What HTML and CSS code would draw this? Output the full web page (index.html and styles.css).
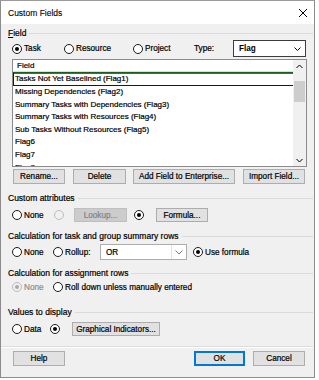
FILE: index.html
```html
<!DOCTYPE html>
<html>
<head>
<meta charset="utf-8">
<link rel="stylesheet" href="styles.css">
</head>
<body>
<div class="dialog">
  <div class="titlebar">
    <span class="title">Custom Fields</span>
    <svg class="close" width="10" height="10" viewBox="0 0 10 10"><path d="M1 1L9 9M9 1L1 9" stroke="#000" stroke-width="1"/></svg>
  </div>
  <div class="content">
    <div class="group-head h-field"><span><u>F</u>ield</span><i class="rule"></i></div>
    <div class="row type-row">
      <label class="radio w-task"><span class="circle on"></span>Task</label>
      <label class="radio w-res"><span class="circle"></span>Resource</label>
      <label class="radio w-proj"><span class="circle"></span>Project</label>
      <span class="type-label">Type:</span>
      <div class="select type-select"><span class="sel-text bold">Flag</span><svg width="7" height="4" viewBox="0 0 7 4"><path d="M0.5 0.5L3.5 3.5L6.5 0.5" fill="none" stroke="#000"/></svg></div>
    </div>
    <div class="row list-wrap">
      <div class="listbox">
        <div class="list-main">
          <div class="list-head">Field</div>
          <div class="list-row selected">Tasks Not Yet Baselined (Flag1)</div>
          <div class="list-row">Missing Dependencies (Flag2)</div>
          <div class="list-row">Summary Tasks with Dependencies (Flag3)</div>
          <div class="list-row">Summary Tasks with Resources (Flag4)</div>
          <div class="list-row">Sub Tasks Without Resources (Flag5)</div>
          <div class="list-row">Flag6</div>
          <div class="list-row">Flag7</div>
          <div class="list-row">Flag8</div>
        </div>
        <div class="scrollbar">
          <svg class="arrow" width="7" height="5" viewBox="0 0 7 5"><path d="M0.5 4L3.5 1L6.5 4" fill="none" stroke="#000"/></svg>
          <div class="thumb"></div>
          <div class="track"></div>
          <svg class="arrow" width="7" height="5" viewBox="0 0 7 5"><path d="M0.5 1L3.5 4L6.5 1" fill="none" stroke="#000"/></svg>
        </div>
      </div>
    </div>
    <div class="row btn-row">
      <button class="btn b-rename">Rename...</button>
      <button class="btn b-delete">Delete</button>
      <button class="btn b-add">Add Field to Enterprise...</button>
      <button class="btn b-import">Import Field...</button>
    </div>

    <div class="group-head h-attr"><span>Custom attributes</span><i class="rule"></i></div>
    <div class="row attr-row">
      <label class="radio w-none"><span class="circle"></span>None</label>
      <span class="circle disabled lone"></span>
      <button class="btn disabled b-lookup">Lookup...</button>
      <span class="circle on lone2"></span>
      <button class="btn b-formula">Formula...</button>
    </div>

    <div class="group-head h-calc"><span>Calculation for task and group summary rows</span><i class="rule"></i></div>
    <div class="row calc-row">
      <label class="radio w-none2"><span class="circle"></span>None</label>
      <label class="radio w-rollup"><span class="circle"></span>Rollup:</label>
      <div class="select or-select"><span class="sel-text">OR</span><i class="divider"></i><svg width="8" height="5" viewBox="0 0 8 5"><path d="M0.5 0.5L4 4L7.5 0.5" fill="none" stroke="#777"/></svg></div>
      <label class="radio use-formula"><span class="circle on"></span>Use formula</label>
    </div>

    <div class="group-head h-assign"><span>Calculation for assignment rows</span><i class="rule"></i></div>
    <div class="row assign-row">
      <label class="radio w-none2 grey"><span class="circle on disabled"></span>None</label>
      <label class="radio"><span class="circle"></span>Roll down unless manually entered</label>
    </div>

    <div class="group-head h-values"><span>Values to display</span><i class="rule"></i></div>
    <div class="row values-row">
      <label class="radio w-data"><span class="circle"></span>Data</label>
      <span class="circle on"></span>
      <button class="btn b-graph">Graphical Indicators...</button>
    </div>

    <div class="separator"></div>
    <div class="row bottom-row">
      <button class="btn b-help">Help</button>
      <button class="btn default b-ok">OK</button>
      <button class="btn b-cancel">Cancel</button>
    </div>
  </div>
</div>
</body>
</html>
```

FILE: styles.css
```css
* { box-sizing: border-box; }
html, body { margin: 0; padding: 0; background: #fff; }
body {
  font-family: "Liberation Sans", Arial, sans-serif;
  font-size: 8.2px;
  color: #000;
}
.dialog {
  width: 315px;
  height: 378px;
  border: 1px solid #8c8c8c;
  border-top-color: #9a9a9a;
  background: #f0f0f0;
  display: flex;
  flex-direction: column;
}
.titlebar {
  height: 23px;
  background: #fff;
  display: flex;
  align-items: center;
  justify-content: space-between;
  padding: 0 6px 0 7px;
}
.title { font-size: 8.5px; -webkit-text-stroke: 0.1px #000; }
.content {
  padding: 0 1px 0 7px;
  -webkit-text-stroke: 0.2px #000;
}
.group-head {
  height: 10px;
  display: flex;
  align-items: center;
  line-height: 10px;
  font-size: 8.5px;
}
.group-head u { text-decoration: underline; text-underline-offset: 1px; }
.rule {
  flex: 1;
  height: 1px;
  background: #dadada;
  margin-left: 3px;
}
.row {
  display: flex;
  align-items: center;
  padding: 0 6px 0 4px;
}
.radio {
  display: inline-flex;
  align-items: center;
  gap: 2px;
  white-space: nowrap;
}
.circle {
  display: inline-block;
  position: relative;
  width: 10px;
  height: 10px;
  border: 1px solid #1a1a1a;
  border-radius: 50%;
  background: #fff;
  flex: none;
}
.circle.on::after {
  content: "";
  position: absolute;
  left: 2px; top: 2px;
  width: 4px; height: 4px;
  border-radius: 50%;
  background: #000;
}
.circle.disabled { border-color: #bcbcbc; background: #f0f0f0; }
.circle.disabled.on::after { background: #a8a8a8; }
.grey { color: #8d8d8d; -webkit-text-stroke-color: #8d8d8d; }

.h-field { margin-top: 4px; }
.type-row { margin-top: 2px; height: 17px; }
.w-task { width: 52px; }
.w-res { width: 69px; }
.w-proj { width: 61px; }
.type-label { width: 39px; }
.select {
  height: 17px;
  background: #fff;
  border: 1px solid #3c3c3c;
  display: flex;
  align-items: center;
  padding: 0 4px 0 5px;
}
.select svg { flex: none; margin-left: auto; }
.type-select { width: 73px; }
.bold { font-weight: bold; -webkit-text-stroke: 0; }

.list-wrap { margin-top: 2px; }
.listbox {
  width: 100%;
  height: 108px;
  border: 1px solid #8b8b8b;
  background: #fff;
  display: flex;
  overflow: hidden;
}
.list-main { flex: 1; overflow: hidden; font-size: 8px; }
.list-head {
  height: 12px;
  line-height: 12px;
  padding-left: 4px;
  border-bottom: 1px solid #dcdcdc;
}
.list-row {
  height: 12.6px;
  line-height: 12.6px;
  padding-left: 2px;
  white-space: nowrap;
}
.list-row.selected {
  height: 14px;
  line-height: 12px;
  border-top: 1px solid #1b5e20;
  border-left: 1px solid #1a1a1a;
  border-bottom: 1px solid #1a1a1a;
  box-shadow: inset 0 1px 0 #2e7d32;
  padding-left: 1px;
}
.scrollbar {
  width: 13px;
  background: #f0f0f0;
  display: flex;
  flex-direction: column;
  align-items: center;
  padding: 4px 0 3px;
}
.arrow { flex: none; }
.thumb {
  width: 11px;
  height: 21px;
  background: #cdcdcd;
  margin-top: 12px;
}
.track { flex: 1; }

.btn {
  font-family: inherit;
  font-size: 8.2px;
  color: #000;
  height: 15px;
  padding: 0;
  background: #e1e1e1;
  border: 1px solid #adadad;
  -webkit-text-stroke: 0.2px #000;
}
.btn-row { margin-top: 2px; }
.b-rename { width: 52px; margin-left: 1px; }
.b-delete { width: 53px; margin-left: 8px; }
.b-add { width: 102px; margin-left: 7px; }
.b-import { width: 62px; margin-left: 8px; }

.h-attr { margin-top: 9px; }
.attr-row { margin-top: 5px; height: 14px; }
.w-none { width: 42px; }
.btn.disabled {
  background: #cccccc;
  border-color: #bfbfbf;
  color: #838383;
  -webkit-text-stroke-color: #838383;
}
.b-lookup { width: 53px; height: 14px; margin-left: 10px; }
.lone2 { margin-left: 7px; }
.b-formula { width: 52px; height: 14px; margin-left: 12px; }

.h-calc { margin-top: 9px; }
.calc-row { margin-top: 3px; height: 16px; }
.w-none2 { width: 41px; }
.w-rollup { width: 47px; }
.or-select {
  width: 87px;
  height: 16px;
  border-color: #adadad;
  padding-right: 3px;
}
.divider { width: 1px; height: 14px; background: #e3e3e3; margin-left: auto; margin-right: 3px; }
.or-select svg { margin-left: 0; }
.use-formula { margin-left: 6px; }

.h-assign { margin-top: 8px; }
.assign-row { margin-top: 3px; height: 12px; }

.h-values { margin-top: 14px; }
.values-row { margin-top: 5px; height: 14px; }
.w-data { width: 38px; }
.b-graph { width: 88px; height: 14px; margin-left: 12px; }

.separator {
  margin-top: 10px;
  margin-left: -7px;
  height: 2px;
  border-top: 1px solid #dcdcdc;
  border-bottom: 1px solid #fff;
}
.bottom-row { margin-top: 3px; }
.b-help { width: 52px; margin-left: 1px; }
.b-ok {
  width: 51px;
  margin-left: 129px;
  border: 1px solid #0078d7;
  box-shadow: inset 0 0 0 1px #0078d7;
}
.b-cancel { width: 52px; margin-left: 8px; }
```
